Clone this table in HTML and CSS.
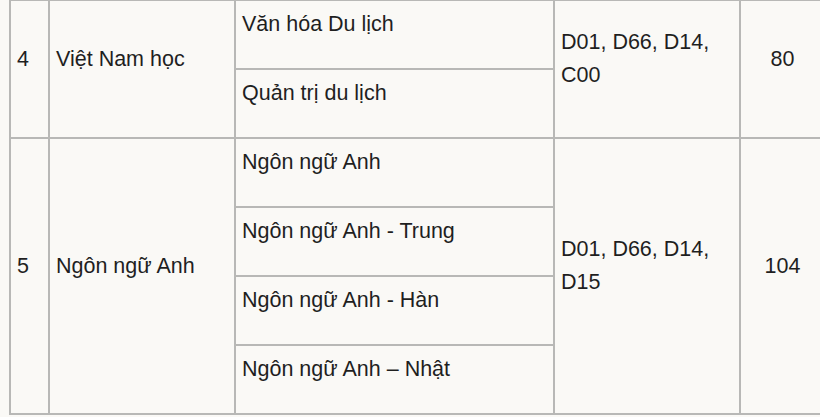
FILE: index.html
```html
<!DOCTYPE html>
<html lang="vi">
<head>
<meta charset="utf-8">
<title>Ngành đào tạo</title>
<link rel="stylesheet" href="styles.css">
</head>
<body>
<table class="admissions">
  <colgroup>
    <col class="c-no">
    <col class="c-major">
    <col class="c-program">
    <col class="c-combo">
    <col class="c-quota">
  </colgroup>
  <tbody>
    <tr>
      <td rowspan="2">4</td>
      <td rowspan="2">Việt Nam học</td>
      <td>Văn hóa Du lịch</td>
      <td rowspan="2">D01, D66, D14, C00</td>
      <td rowspan="2" class="num">80</td>
    </tr>
    <tr>
      <td>Quản trị du lịch</td>
    </tr>
    <tr>
      <td rowspan="4">5</td>
      <td rowspan="4">Ngôn ngữ Anh</td>
      <td>Ngôn ngữ Anh</td>
      <td rowspan="4">D01, D66, D14, D15</td>
      <td rowspan="4" class="num">104</td>
    </tr>
    <tr>
      <td>Ngôn ngữ Anh - Trung</td>
    </tr>
    <tr>
      <td>Ngôn ngữ Anh - Hàn</td>
    </tr>
    <tr>
      <td>Ngôn ngữ Anh – Nhật</td>
    </tr>
  </tbody>
</table>
</body>
</html>
```
FILE: styles.css
```css
html, body {
  margin: 0;
  padding: 0;
  background: #faf9f6;
  overflow: hidden;
}

.admissions {
  border-collapse: collapse;
  table-layout: fixed;
  width: 816px;
  margin: -1px 0 0 9px;
  font-family: "Liberation Sans", Arial, sans-serif;
  font-size: 21.5px;
  line-height: 33px;
  color: #1f1f1f;
}

.c-no { width: 39px; }
.c-major { width: 186px; }
.c-program { width: 319px; }
.c-combo { width: 186px; }
.c-quota { width: 86px; }

.admissions td {
  border: 2px solid #b8b8b6;
  padding: 7px 7px 27px 6px;
  vertical-align: middle;
  text-align: left;
  height: 33px;
}

.admissions td.num {
  text-align: center;
}
```
